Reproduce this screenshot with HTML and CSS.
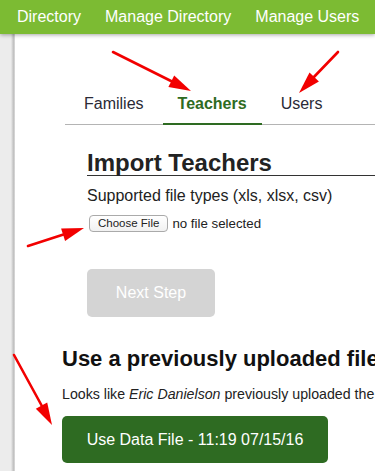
FILE: index.html
```html
<!DOCTYPE html>
<html lang="en">
<head>
<meta charset="utf-8">
<title>Import Teachers</title>
<link rel="stylesheet" href="styles.css">
</head>
<body>
<header class="topbar">
  <nav class="mainnav">
    <a href="#">Directory</a>
    <a href="#">Manage Directory</a>
    <a href="#">Manage Users</a>
  </nav>
</header>
<div class="page">
  <aside class="rail"></aside>
  <main class="content">
    <ul class="tabs">
      <li><a href="#">Families</a></li>
      <li class="active"><a href="#">Teachers</a></li>
      <li><a href="#">Users</a></li>
    </ul>
    <section class="import">
      <h2 class="import-title">Import Teachers</h2>
      <p class="types">Supported file types (xls, xlsx, csv)</p>
      <div class="file-row">
        <button class="choose" type="button">Choose File</button>
        <span class="file-name">no file selected</span>
      </div>
      <button class="next" type="button" disabled>Next Step</button>
    </section>
    <section class="previous">
      <h3 class="previous-title">Use a previously uploaded file</h3>
      <p class="previous-note">Looks like <em>Eric Danielson</em> previously uploaded the file below.</p>
      <button class="use" type="button">Use Data File - 11:19 07/15/16</button>
    </section>
  </main>
</div>
<svg class="arrows" width="375" height="471" viewBox="0 0 375 471" aria-hidden="true">
  <g stroke="#f20000" stroke-width="2.6" stroke-linecap="round" fill="#f20000">
    <line x1="113" y1="52" x2="173" y2="82"/>
    <polygon stroke="none" points="191,91 168.4,87.0 174.2,75.4"/>
    <line x1="338" y1="52" x2="312" y2="79"/>
    <polygon stroke="none" points="299,93 309.5,72.6 318.9,81.6"/>
    <line x1="28" y1="246" x2="65" y2="234"/>
    <polygon stroke="none" points="84,228 65.1,240.9 61.1,228.5"/>
    <line x1="14" y1="355" x2="43" y2="408"/>
    <polygon stroke="none" points="52,425 35.8,408.8 47.2,402.6"/>
  </g>
</svg>
</body>
</html>
```
FILE: styles.css
```css
html, body {
  margin: 0;
  padding: 0;
  overflow: hidden;
}
body {
  font-family: "Liberation Sans", Arial, sans-serif;
  color: #222;
  background: #fff;
  width: 375px;
  height: 471px;
}
.topbar {
  position: relative;
  z-index: 1;
  height: 34px;
  background: #7cbb33;
  box-shadow: 0 1px 4px rgba(0, 0, 0, 0.35);
}
.mainnav {
  display: flex;
  padding-left: 5px;
  white-space: nowrap;
}
.mainnav a {
  display: block;
  padding: 0 12px;
  line-height: 34px;
  font-size: 16px;
  color: #fff;
  text-decoration: none;
}
.page {
  display: flex;
  height: 437px;
}
.rail {
  flex: 0 0 15px;
  background: linear-gradient(90deg, #ececec 0, #ececec 11px, #d8d8d8 12px, #c2c2c2 13.5px, #dcdcdc 15px);
}
.content {
  flex: 1;
  min-width: 0;
  padding-left: 47px;
  white-space: nowrap;
}
.tabs {
  list-style: none;
  display: flex;
  gap: 4px;
  margin: 50px 0 0 3px;
  padding: 0 0 0 4px;
  border-bottom: 1px solid #b4b4b4;
}
.tabs li {
  margin-bottom: -1px;
}
.tabs a {
  display: block;
  padding: 10px 15px 9px;
  line-height: 20px;
  font-size: 16px;
  color: #2a2a36;
  text-decoration: none;
  border-bottom: 2px solid transparent;
}
.tabs .active a {
  color: #2e6b22;
  font-weight: bold;
  border-bottom-color: #2e6b22;
}
.import {
  margin-left: 25px;
}
.import-title {
  margin: 26px 0 0;
  font-size: 24px;
  line-height: 24px;
  font-weight: bold;
  color: #222;
  border-bottom: 1px solid #333;
}
.types {
  margin: 10px 0 0;
  font-size: 16px;
  line-height: 20px;
}
.file-row {
  display: flex;
  align-items: center;
  gap: 4px;
  margin-top: 9px;
  height: 17px;
}
.choose {
  margin-left: 2px;
  height: 17px;
  padding: 0 8px;
  font-family: inherit;
  font-size: 11.5px;
  line-height: 15px;
  color: #222;
  background: linear-gradient(#ffffff, #f1f1f1);
  border: 1px solid #aaa;
  border-radius: 4px;
}
.file-name {
  font-size: 13.3px;
  line-height: 17px;
}
.next {
  display: block;
  margin-top: 37px;
  width: 128px;
  height: 48px;
  padding: 0;
  font-family: inherit;
  font-size: 16px;
  color: #fff;
  background: #d4d4d4;
  border: none;
  border-radius: 5px;
}
.previous {
  margin-top: 30px;
}
.previous-title {
  margin: 0;
  font-size: 22px;
  line-height: 24px;
  font-weight: bold;
  color: #111;
}
.previous-note {
  margin: 14px 0 0;
  font-size: 14.2px;
  line-height: 18px;
}
.use {
  display: block;
  margin-top: 13px;
  width: 266px;
  height: 47px;
  padding: 0;
  font-family: inherit;
  font-size: 16px;
  color: #fff;
  background: #2e6b22;
  border: none;
  border-radius: 5px;
}
.arrows {
  position: absolute;
  top: 0;
  left: 0;
  pointer-events: none;
}
```
